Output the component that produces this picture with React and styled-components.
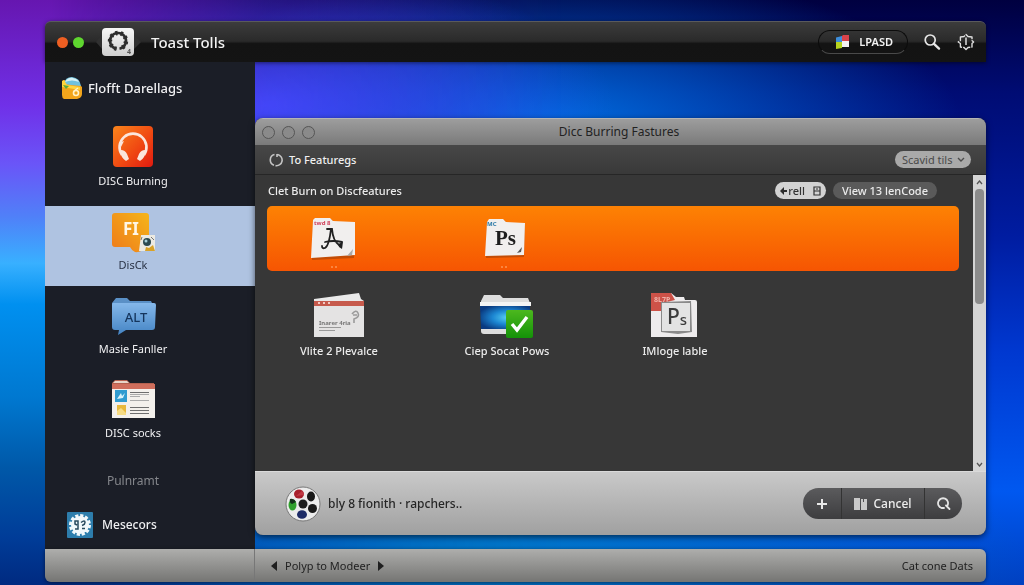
import React from 'react';
import styled, { createGlobalStyle } from 'styled-components';

const sections = [
    { id: 'burning', label: 'DISC Burning', icon: <HeadphonesIcon /> },
    { id: 'disck', label: 'DisCk', icon: <FlashIcon />, active: true },
    { id: 'masie', label: 'Masie Fanller', icon: <AltIcon /> },
    { id: 'socks', label: 'DISC socks', icon: <CardIcon /> },
];

const files = [
    { id: 'vlite', label: 'Vlite 2 Plevalce', icon: <BrowserIcon /> },
    { id: 'ciep', label: 'Ciep Socat Pows', icon: <CheckedFolderIcon /> },
    { id: 'imloge', label: 'IMloge lable', icon: <PsStackIcon /> },
];

const App = () => {
    return (
        <>
            <GlobalStyle />
            <Desktop>
                <TitleBar>
                    <Lights>
                        <Light $color="#ee5f22" aria-label="Close" />
                        <Light $color="#5fd62f" aria-label="Zoom" />
                    </Lights>
                    <AppIcon />
                    <AppTitle>Toast Tolls</AppTitle>
                    <AccountButton><FlagIcon />LPASD</AccountButton>
                    <IconButton aria-label="Search"><SearchIcon /></IconButton>
                    <IconButton aria-label="Settings"><CogIcon /></IconButton>
                </TitleBar>

                <Body>
                    <Sidebar>
                        <SidebarTitle><LibraryIcon />Flofft Darellags</SidebarTitle>
                        <SectionList>
                            {sections.map((s) => (
                                <li key={s.id}>
                                    <SectionLink href={'#' + s.id} $active={s.active}>
                                        {s.icon}
                                        <span>{s.label}</span>
                                    </SectionLink>
                                </li>
                            ))}
                        </SectionList>
                        <Muted>Pulnramt</Muted>
                        <SidebarFooter href="#mesecors"><BadgeIcon />Mesecors</SidebarFooter>
                    </Sidebar>

                    <Main>
                        <Window>
                            <WindowBar>
                                <WindowDots><Dot aria-label="Close window" /><Dot aria-label="Minimise window" /><Dot aria-label="Zoom window" /></WindowDots>
                                <WindowTitle>Dicc Burring Fastures</WindowTitle>
                            </WindowBar>
                            <Toolbar>
                                <RefreshIcon />
                                <ToolbarTitle>To Featuregs</ToolbarTitle>
                                <SelectWrap>
                                    <Select aria-label="Sort"><option>Scavid tils</option></Select>
                                    <ChevronIcon />
                                </SelectWrap>
                            </Toolbar>
                            <ScrollArea>
                                <Content>
                                    <ContentHead>
                                        <ContentTitle>Clet Burn on Discfeatures</ContentTitle>
                                        <Pill $light><BackIcon />rell<DrawerIcon /></Pill>
                                        <Pill>View 13 lenCode</Pill>
                                    </ContentHead>
                                    <Featured>
                                        <FeaturedItem aria-label="Fonts"><FontFolderIcon /></FeaturedItem>
                                        <FeaturedItem aria-label="Photoshop"><PsFolderIcon /></FeaturedItem>
                                    </Featured>
                                    <FileGrid>
                                        {files.map((f) => (
                                            <li key={f.id}>
                                                <FileButton>{f.icon}<span>{f.label}</span></FileButton>
                                            </li>
                                        ))}
                                    </FileGrid>
                                </Content>
                                <Scrollbar>
                                    <ScrollButton aria-label="Scroll up"><ArrowIcon up /></ScrollButton>
                                    <Track><Thumb /></Track>
                                    <ScrollButton aria-label="Scroll down"><ArrowIcon /></ScrollButton>
                                </Scrollbar>
                            </ScrollArea>
                            <ActionBar>
                                <ReelIcon />
                                <Status>bly 8 fionith · rapchers..</Status>
                                <ButtonGroup>
                                    <GroupButton aria-label="Add"><PlusIcon /></GroupButton>
                                    <GroupButton $wide><BookIcon />Cancel</GroupButton>
                                    <GroupButton aria-label="Find"><FindIcon /></GroupButton>
                                </ButtonGroup>
                            </ActionBar>
                        </Window>
                    </Main>
                </Body>

                <Footer>
                    <FooterSide />
                    <FooterMain>
                        <StepButton aria-label="Previous"><TriangleIcon /></StepButton>
                        <span>Polyp to Modeer</span>
                        <StepButton aria-label="Next"><TriangleIcon right /></StepButton>
                        <FooterEnd>Cat cone Dats</FooterEnd>
                    </FooterMain>
                </Footer>
            </Desktop>
        </>
    )
}

export default App;

/* ---------- icons ---------- */

function AppIcon() {
    return (
        <svg width="48" height="32" viewBox="0 0 48 32" aria-hidden="true">
            <defs>
                <linearGradient id="appBg" x1="0" y1="0" x2="0" y2="1">
                    <stop offset="0" stopColor="#f7f7f7" />
                    <stop offset="1" stopColor="#cfcfcf" />
                </linearGradient>
            </defs>
            <path d="M8 9 2 16l6 7zM40 9l7 7-7 7z" fill="#303030" />
            <rect x="8" y="2" width="32" height="28" rx="4" fill="url(#appBg)" />
            <path d="M22.500 22.800A8 8 0 1 1 25.500 22.800" fill="none" stroke="#2d2d2d" strokeWidth="2.600" />
            <path d="M22.500 22.800A8 8 0 1 1 25.500 22.800" fill="none" stroke="#2d2d2d" strokeWidth="4.400" strokeDasharray="2.200 3" />
            <text x="33" y="28" fontSize="7" fontWeight="700" fill="#555">4</text>
        </svg>
    )
}

function FlagIcon() {
    return (
        <svg width="15" height="16" viewBox="0 0 15 16" aria-hidden="true">
            <path d="M1 3.500 7 2v6H1z" fill="#3d8edb" />
            <path d="M8 1h6v7H7V2z" fill="#d9434a" />
            <path d="M1 8h6v6l-6 1z" fill="#b5d21f" />
            <path d="M7 7h7v6H7z" fill="#f2f0f2" />
        </svg>
    )
}

function SearchIcon() {
    return (
        <svg width="18" height="18" viewBox="0 0 18 18" fill="none" stroke="#e6e6e6" aria-hidden="true">
            <circle cx="7.200" cy="7" r="5" strokeWidth="1.700" />
            <path d="m11 10.800 5 4.800" strokeWidth="2.400" strokeLinecap="round" />
        </svg>
    )
}

function CogIcon() {
    return (
        <svg width="18" height="18" viewBox="0 0 18 18" fill="none" stroke="#dedede" aria-hidden="true">
            <path d="M9 1.500 11 3.500 15 4v3.500L16.600 9 15 10.500V14l-4 .5L9 16.600 7 14.500 3.400 14v-3.500L1.200 9l2.200-1.500V4L7 3.500z" strokeWidth="1.400" strokeLinejoin="round" strokeDasharray="9 1" />
            <path d="M9 4.500v7.500" strokeWidth="1.500" />
        </svg>
    )
}

function LibraryIcon() {
    return (
        <svg width="22" height="24" viewBox="0 0 22 24" aria-hidden="true">
            <path d="M1 5 4 4l2 4h12l3 3v7q0 4-5 5H3q-2-1-2-4z" fill="#f2a51c" />
            <path d="M3 8Q4 1 11 1q8 1 9 9L10 9z" fill="#6fc1dd" />
            <path d="M4 6q3-5 8-4 5 1 6 4-7-3-14 0z" fill="#d6f1f5" />
            <path d="M1 5l2-1 3 5 13 2v3L1 11z" fill="#ffd43c" />
            <path d="M2 9l6 1-3 3z" fill="#58a83d" />
            <circle cx="15" cy="17" r="2.500" fill="none" stroke="#fff3c8" strokeWidth="1.600" />
            <path d="M17 12l-4 3" stroke="#fff3c8" strokeWidth="1.400" />
        </svg>
    )
}

function HeadphonesIcon() {
    return (
        <svg width="48" height="44" viewBox="0 0 48 44" aria-hidden="true">
            <defs>
                <linearGradient id="hp" x1="0" y1="0" x2="1" y2="1">
                    <stop offset="0" stopColor="#f9851c" />
                    <stop offset=".55" stopColor="#f04a12" />
                    <stop offset="1" stopColor="#e01a10" />
                </linearGradient>
            </defs>
            <rect x="4" y="0" width="40" height="41" rx="4" fill="url(#hp)" />
            <path d="M13 29A13.500 13.500 0 1 1 35 29" fill="none" stroke="#fbe6dc" strokeWidth="2.600" />
            <path d="M12 24q4 0 6 4l2 5-3 2q-5-3-6-10zM36 24q-4 0-6 4l-2 5 3 2q5-3 6-10z" fill="#fbe6dc" />
            <path d="m10 17 5-2-3 6z" fill="#fbe6dc" />
        </svg>
    )
}

function FlashIcon() {
    return (
        <svg width="48" height="44" viewBox="0 0 48 44" aria-hidden="true">
            <defs>
                <linearGradient id="fl" x1="0" y1="1" x2="1" y2="0">
                    <stop offset="0" stopColor="#ee7a1a" />
                    <stop offset="1" stopColor="#f5b51a" />
                </linearGradient>
            </defs>
            <path d="M6 3h31q3 0 3 3v31q-9 6-14 5-3-1-5-5H6q-3 0-3-3V6q0-3 3-3z" fill="url(#fl)" />
            <text x="14" y="25" fontSize="17" fontWeight="700" fill="#fff6e6">FI</text>
            <path d="M32 25h14v16H30z" fill="#eceae2" />
            <circle cx="38" cy="32" r="4" fill="#2c4a50" />
            <circle cx="37" cy="31" r="1.500" fill="#a8d0d8" />
            <path d="m36 41 1-4 3 1 4-3 2 6z" fill="#d9a227" />
            <path d="m42 27 3 3M33 27l-1 3" stroke="#777" />
        </svg>
    )
}

function AltIcon() {
    return (
        <svg width="48" height="44" viewBox="0 0 48 44" aria-hidden="true">
            <defs>
                <linearGradient id="alt" x1="0" y1="0" x2="0" y2="1">
                    <stop offset="0" stopColor="#85b8ea" />
                    <stop offset="1" stopColor="#4484c4" />
                </linearGradient>
            </defs>
            <path d="M3 9 7 4h11l3 3h21l2 4H3z" fill="#5a90c6" />
            <path d="M4 9h41q2 0 2 2l-1 22q0 3-3 3H17l-8 5 1-5H6q-3 0-3-3V11q0-2 1-2z" fill="url(#alt)" />
            <text x="27" y="28" textAnchor="middle" fontSize="13" fontWeight="500" fill="#15355c">ALT</text>
        </svg>
    )
}

function CardIcon() {
    return (
        <svg width="48" height="44" viewBox="0 0 48 44" aria-hidden="true">
            <path d="M3 10V5l3-3h12l3 3h24v6z" fill="#b4614f" />
            <path d="M4 5l2-2h12l2 2z" fill="#e8d5c8" />
            <path d="M3 9h43v31H3z" fill="#f3f0ec" />
            <path d="M3 6h43v5H3z" fill="#cf6e5c" />
            <path d="M6 12h12v12H6z" fill="#2f9bd0" />
            <path d="m8 21 4-6 1 3 3-3-2 5z" fill="#d8f2fb" />
            <path d="M8 27h9v10H8z" fill="#e9b93c" />
            <path d="m8 33 4-3 5 5v2H8z" fill="#f7dc84" />
            <path d="M21 14.500h19M21 29.500h19M21 32.500h19M21 35.500h19" stroke="#6e6e6e" />
            <path d="M21 22.500h19M21 18.500h10M21 16.500h19" stroke="#aaa" />
        </svg>
    )
}

function BadgeIcon() {
    return (
        <svg width="26" height="26" viewBox="0 0 26 26" aria-hidden="true">
            <rect width="26" height="26" rx="1" fill="#2d7dac" />
            <circle cx="13" cy="13" r="9" fill="#f2f8fb" />
            <circle cx="13" cy="13" r="9" fill="none" stroke="#f2f8fb" strokeWidth="4" strokeDasharray="3 1.700" />
            <path d="M8 17h3V9H8v3l2 1M14 10.500q4-3 4 0 0 2-3 3M15 16.500h3" fill="none" stroke="#2a4a5e" strokeWidth="1.500" />
        </svg>
    )
}

function RefreshIcon() {
    return (
        <svg width="14" height="14" viewBox="0 0 14 14" fill="none" stroke="#c4c4c4" strokeWidth="1.600" aria-hidden="true">
            <path d="M5.500 1.500A5.600 5.600 0 0 0 5 12.200M8.500 1.500A5.600 5.600 0 0 1 6.500 12.600M8 1v3" />
        </svg>
    )
}

function ChevronIcon() {
    return (
        <svg width="8" height="6" viewBox="0 0 8 6" fill="none" stroke="#4c4c4c" strokeWidth="1.400" aria-hidden="true">
            <path d="m1 1 3 3 3-3" />
        </svg>
    )
}

function BackIcon() {
    return (
        <svg width="7" height="8" viewBox="0 0 7 8" aria-hidden="true">
            <path d="M4 0v3h3v2H4v3L0 4z" fill="#2b2b2b" />
        </svg>
    )
}

function DrawerIcon() {
    return (
        <svg width="8" height="10" viewBox="0 0 8 10" fill="none" stroke="#333" strokeWidth="1.200" aria-hidden="true">
            <path d="M1 1h6v8H1zM1 5h6M3 3h2" />
        </svg>
    )
}

function FontFolderIcon() {
    return (
        <svg width="46" height="52" viewBox="0 0 46 52" aria-hidden="true">
            <path d="m3 3 18-1 3 3 21 2-1 34-42 2z" fill="#8f3a08" opacity=".5" />
            <path d="m3 3 2-2h15l3 3 22 1v33L1 41z" fill="#f1efee" />
            <text x="4" y="8" fontSize="6" fontWeight="700" fill="#d0405a">twd 8</text>
            <path d="M21 12q-2 17-6 19-3 1-3-2M17 12h5q1 12 7 16M15 25q8-2 17 0" fill="none" stroke="#202020" strokeWidth="1.800" strokeLinecap="round" />
            <path d="m28 27 5-2-1 7-3-2z" fill="#202020" />
            <path d="m37 39 6-7-1 6z" fill="#aaa" />
            <path d="M21 50h2M25 50h2" stroke="#ffb27a" />
        </svg>
    )
}

function PsFolderIcon() {
    return (
        <svg width="42" height="52" viewBox="0 0 42 52" aria-hidden="true">
            <path d="m3 4 17-1 3 3 18 1-1 33-38 1z" fill="#8f3a08" opacity=".5" />
            <path d="m3 5 2-3h14l3 3 19 1-1 32-39 1z" fill="#f1efee" />
            <text x="3" y="9" fontSize="6" fontWeight="700" fill="#2d7ba8">MC</text>
            <SerifText x="11" y="28" fontSize="21" fontWeight="700" fill="#1e1e1e">Ps</SerifText>
            <path d="m33 36 5-6-1 5z" fill="#555" />
            <path d="M17 50h2M21 50h2" stroke="#ffb27a" />
        </svg>
    )
}

function BrowserIcon() {
    return (
        <svg width="56" height="48" viewBox="0 0 56 48" aria-hidden="true">
            <path d="m3 7 45-6 2 6 3 2H3z" fill="#e9e9e9" />
            <path d="M3 9h50v36H3z" fill="#e4e3e3" />
            <path d="M3 9h50v5H3z" fill="#c65a4c" />
            <path d="M7 11h2M12 11h2M17 11h2" stroke="#f3c9c2" strokeWidth="2" />
            <text x="8" y="33" fontSize="6" fontWeight="700" fill="#777">Inarer 4ria</text>
            <path d="M8 35.500h22M8 38.500h16" stroke="#999" />
            <path d="M41 22q4-5 6-1t-4 6v4M42 23h4" fill="none" stroke="#9a9a9a" strokeWidth="1.600" />
        </svg>
    )
}

function CheckedFolderIcon() {
    return (
        <svg width="56" height="48" viewBox="0 0 56 48" aria-hidden="true">
            <defs>
                <radialGradient id="sky" cx=".55" cy=".5" r=".6">
                    <stop offset="0" stopColor="#58d0f4" />
                    <stop offset=".5" stopColor="#1c86d2" />
                    <stop offset="1" stopColor="#0a3a80" />
                </radialGradient>
                <linearGradient id="ok" x1="0" y1="0" x2="0" y2="1">
                    <stop offset="0" stopColor="#4cb81e" />
                    <stop offset="1" stopColor="#149208" />
                </linearGradient>
            </defs>
            <path d="M2 9 5 3h16l3 3h25l2 5v29q0 2-3 2H5q-3 0-3-3z" fill="#dedede" />
            <path d="M1 10h51v4H1z" fill="#f4f4f4" />
            <path d="M1 14h50v23H2z" fill="url(#sky)" />
            <rect x="27" y="18" width="27" height="28" rx="2" fill="url(#ok)" />
            <path d="m33 32 5 6 10-13" fill="none" stroke="#fff" strokeWidth="3.400" />
        </svg>
    )
}

function PsStackIcon() {
    return (
        <svg width="56" height="48" viewBox="0 0 56 48" aria-hidden="true">
            <path d="M4 1h20l5 4h8l1 3h10q2 0 2 2v35H4z" fill="#eeeced" />
            <path d="M4 1h20l4 7-12 3v8H4z" fill="#cd5248" />
            <text x="7" y="10" fontSize="7" fontWeight="700" fill="#efb0a8">8L7P</text>
            <path d="m14 10 30-1 1 31-14 2-17-2z" fill="#8a8a8a" />
            <path d="M15 11h28v28H15z" fill="#e3e3e3" />
            <text x="20" y="32" fontSize="21" fontWeight="500" fill="#3c3c3c">P<tspan fontSize="15" dy="1">s</tspan></text>
        </svg>
    )
}

function ReelIcon() {
    return (
        <svg width="36" height="36" viewBox="0 0 36 36" aria-hidden="true">
            <circle cx="18" cy="18" r="17" fill="#ececec" stroke="#777" />
            <ellipse cx="14" cy="8" rx="5" ry="4.500" fill="#a8202c" />
            <ellipse cx="26" cy="10.500" rx="4" ry="5" fill="#191919" />
            <ellipse cx="27.500" cy="22.500" rx="4.500" ry="4.500" fill="#191919" />
            <ellipse cx="17" cy="28.500" rx="5" ry="4.300" fill="#1d2b66" />
            <ellipse cx="7.500" cy="19" rx="4" ry="5.500" fill="#2fa02c" />
            <path d="M5 13q4-1 6 3l-4 2q-3-1-2-5z" fill="#15301a" />
            <circle cx="18" cy="18" r="4.500" fill="#1f1f1f" />
            <path d="m11 10 6-5q2 2 2 4z" fill="#d8505a" opacity=".5" />
        </svg>
    )
}

function PlusIcon() {
    return (
        <svg width="10" height="10" viewBox="0 0 10 10" stroke="#e8e8e8" strokeWidth="2" aria-hidden="true">
            <path d="M5 0v10M0 5h10" />
        </svg>
    )
}

function BookIcon() {
    return (
        <svg width="13" height="12" viewBox="0 0 13 12" fill="#c9c9c9" aria-hidden="true">
            <path d="M0 0h6v12H0zM7 1h2v3h1V1h3v11H7z" />
        </svg>
    )
}

function FindIcon() {
    return (
        <svg width="14" height="14" viewBox="0 0 14 14" fill="none" stroke="#e4e4e4" strokeWidth="1.800" aria-hidden="true">
            <path d="M7 11H4.500A5 5 0 1 1 10.500 8.500M9 8.500l3.500 3.500" strokeLinecap="round" />
        </svg>
    )
}

function ArrowIcon({ up }) {
    return (
        <svg width="7" height="5" viewBox="0 0 7 5" fill="none" stroke="#555" strokeWidth="1.300" aria-hidden="true">
            <path d={up ? 'M1 4 3.500 1 6 4' : 'M1 1l2.500 3L6 1'} />
        </svg>
    )
}

function TriangleIcon({ right }) {
    return (
        <svg width="6" height="10" viewBox="0 0 6 10" fill="#1f1f1f" aria-hidden="true">
            <path d={right ? 'M0 0v10l6-5z' : 'M6 0v10L0 5z'} />
        </svg>
    )
}

/* ---------- styles ---------- */

const GlobalStyle = createGlobalStyle`
    * {
        box-sizing: border-box;
    }
    body {
        margin: 0;
        font-family: 'Noto Sans', 'Open Sans', sans-serif;
        font-size: 12px;
        line-height: 16px;
    }
    button, select {
        margin: 0;
        padding: 0;
        border: none;
        background: none;
        font: inherit;
        color: inherit;
        cursor: pointer;
    }
    h1, h2, h3, p, ul {
        margin: 0;
        padding: 0;
        font-size: inherit;
        font-weight: 400;
        list-style: none;
    }
    a {
        color: inherit;
        text-decoration: none;
    }
    svg {
        display: block;
        flex: none;
    }
`;

const SerifText = styled.text`
    font-family: 'Liberation Serif', serif;
`;

const Desktop = styled.div`
    position: relative;
    z-index: 0;
    display: flex;
    flex-direction: column;
    min-height: 100vh;
    padding: 21px 38px 3px 45px;
    background:
        radial-gradient(ellipse 34% 24% at 26% 18%, #3050ff, transparent),
        radial-gradient(ellipse 40% 28% at 54% 22%, rgba(0, 120, 235, 0.9), transparent),
        radial-gradient(ellipse 55% 30% at 45% 96%, rgba(0, 130, 200, 0.9), transparent),
        linear-gradient(180deg, #000040 0%, #000c74 16%, #001ca0 40%, #0038d0 60%, #0058f0 84%, #0040c0 100%);

    /* glow behind the left edge */
    &::before {
        content: '';
        position: fixed;
        inset: 0;
        z-index: -1;
        background: linear-gradient(180deg, #6616b0 0%, #7030e8 18%, #6a55f8 28%, #5080f8 37%, #38b0ff 45%, #0090f0 52%, #0078d0 68%, #0058a8 80%, #003c98 92%, #002a80 100%);
        mask-image: linear-gradient(90deg, #000 5%, rgba(0, 0, 0, 0.3) 26%, transparent 55%);
    }
`;

const TitleBar = styled.header`
    display: flex;
    align-items: center;
    height: 41px;
    padding: 0 11px 0 12px;
    border-top: 1px solid #5a5a5c;
    border-radius: 6px 6px 0 0;
    background: linear-gradient(#3c3c3c 0%, #2a2a2a 48%, #131313 54%, #141414 100%);
    color: #f2f2f2;
    box-shadow: 0 1px 4px rgba(0, 0, 0, 0.5);
`;

const Lights = styled.div`
    display: flex;
    gap: 5px;
    margin-right: 10px;
`;

const Light = styled.button`
    width: 11px;
    height: 11px;
    border-radius: 50%;
    background: ${(p) => p.$color};
`;

const AppTitle = styled.h1`
    flex: 1;
    margin-left: 9px;
    font-size: 15px;
    font-weight: 500;
`;

const AccountButton = styled.button`
    display: flex;
    align-items: center;
    gap: 9px;
    height: 24px;
    margin-right: 15px;
    padding: 0 14px 0 16px;
    border: 1px solid #0c0c0c;
    border-bottom-color: #4a4a4a;
    border-radius: 12px;
    font-size: 11px;
    font-weight: 600;
`;

const IconButton = styled.button`
    & + & {
        margin-left: 16px;
    }
`;

const Body = styled.div`
    display: flex;
    flex: 1;
`;

const Sidebar = styled.nav`
    display: flex;
    flex-direction: column;
    width: 210px;
    padding-bottom: 11px;
    background: #1b1e27;
    color: #f0f0f2;
    font-weight: 500;
`;

const SidebarTitle = styled.h2`
    display: flex;
    align-items: center;
    gap: 5px;
    padding: 14px 16px 22px;
    font-size: 13px;
    font-weight: 500;
`;

const SectionList = styled.ul`
    display: flex;
    flex-direction: column;
    gap: 4px;
`;

const SectionLink = styled.a`
    display: flex;
    flex-direction: column;
    align-items: center;
    gap: 3px;
    padding: 4px 34px 13px 0;
    background: ${(p) => (p.$active ? '#afc3e1' : 'transparent')};
    color: ${(p) => (p.$active ? '#2a3346' : 'inherit')};
    font-size: 11px;
`;

const Muted = styled.p`
    margin-top: 19px;
    padding-right: 34px;
    color: #85878c;
    text-align: center;
`;

const SidebarFooter = styled.a`
    display: flex;
    align-items: center;
    gap: 9px;
    margin-top: auto;
    padding-left: 22px;
`;

const Main = styled.main`
    display: flex;
    flex: 1;
    padding: 56px 0 14px;
`;

const Window = styled.section`
    display: flex;
    flex: 1;
    flex-direction: column;
    overflow: hidden;
    border-radius: 8px;
    background: #373737;
    box-shadow: 0 2px 6px rgba(0, 0, 0, 0.6);
`;

const WindowBar = styled.div`
    display: grid;
    grid-template-columns: 1fr auto 1fr;
    align-items: center;
    height: 27px;
    padding: 0 10px 0 7px;
    border-top: 1px solid #b5b5b5;
    background: linear-gradient(#9d9d9d, #7a7a7a);
    color: #222;
`;

const WindowDots = styled.div`
    display: flex;
    gap: 7px;
`;

const Dot = styled.button`
    width: 13px;
    height: 13px;
    border: 1px solid #555;
    border-radius: 50%;
    background: #8a8a8a;
`;

const WindowTitle = styled.h2`
    text-align: center;
`;

const Toolbar = styled.div`
    display: flex;
    align-items: center;
    gap: 6px;
    height: 30px;
    padding: 0 15px 0 14px;
    border-bottom: 1px solid #262626;
    background: linear-gradient(#474747, #393939);
    color: #f0f0f0;
`;

const ToolbarTitle = styled.h3`
    flex: 1;
    font-size: 11px;
    font-weight: 500;
`;

/* the arrow shares the grid cell of the select */
const SelectWrap = styled.div`
    display: grid;
    align-items: center;

    & > * {
        grid-area: 1 / 1;
    }
    & > svg {
        justify-self: end;
        margin-right: 6px;
        pointer-events: none;
    }
`;

const Select = styled.select`
    height: 17px;
    padding: 0 18px 0 7px;
    border-radius: 9px;
    background: #a9a9a9;
    color: #4a4a4a;
    font-size: 11px;
    appearance: none;
`;

const ScrollArea = styled.div`
    display: flex;
    flex: 1;
`;

const Content = styled.div`
    flex: 1;
    color: #ececec;
`;

const ContentHead = styled.div`
    display: flex;
    align-items: center;
    gap: 7px;
    padding: 7px 36px 7px 13px;
`;

const ContentTitle = styled.h3`
    flex: 1;
    font-size: 11px;
    font-weight: 500;
`;

const Pill = styled.button`
    display: flex;
    align-items: center;
    gap: ${(p) => (p.$light ? '1px' : '0')};
    height: 17px;
    padding: 0 ${(p) => (p.$light ? '5px' : '9px')};
    border-radius: 9px;
    background: ${(p) => (p.$light ? '#d2d2d2' : '#5a5a5a')};
    color: ${(p) => (p.$light ? '#333' : '#ececec')};
    font-size: 11px;
    font-weight: 500;

    & > svg:last-child {
        margin-left: 7px;
    }
`;

const Featured = styled.div`
    display: flex;
    align-items: flex-start;
    gap: 128px;
    height: 65px;
    margin: 0 14px 0 12px;
    padding: 11px 43px 0;
    border-radius: 5px;
    background: linear-gradient(#fd8204, #f65502);
`;

const FeaturedItem = styled.button`
    display: block;
`;

const FileGrid = styled.ul`
    display: grid;
    grid-template-columns: repeat(auto-fill, 168px);
    padding-top: 21px;
`;

const FileButton = styled.button`
    display: flex;
    flex-direction: column;
    align-items: center;
    gap: 3px;
    width: 100%;
    font-size: 11px;
    font-weight: 500;
`;

const Scrollbar = styled.div`
    display: flex;
    flex-direction: column;
    width: 13px;
    background: #d4d4d4;
`;

const ScrollButton = styled.button`
    display: grid;
    place-items: center;
    height: 14px;
`;

const Track = styled.div`
    flex: 1;
    padding: 0 2px;
`;

const Thumb = styled.div`
    height: 43%;
    border-radius: 4px;
    background: #8b8b8b;
`;

const ActionBar = styled.div`
    display: flex;
    align-items: center;
    gap: 7px;
    height: 64px;
    padding: 0 24px 0 30px;
    border-top: 1px solid #dadada;
    background: linear-gradient(#c9c9c9, #a0a0a0);
`;

const Status = styled.p`
    flex: 1;
    color: #262626;
    font-weight: 500;
`;

const ButtonGroup = styled.div`
    display: flex;
    overflow: hidden;
    height: 31px;
    border-radius: 16px;
    background: linear-gradient(#5b5b5d, #3d3d3f);
`;

const GroupButton = styled.button`
    display: flex;
    align-items: center;
    justify-content: center;
    gap: 6px;
    width: ${(p) => (p.$wide ? '83px' : '38px')};
    color: #eee;
    font-weight: 500;

    & + & {
        border-left: 1px solid #333;
    }
`;

const Footer = styled.footer`
    display: flex;
    height: 33px;
    border-radius: 0 6px 6px 6px;
    background: linear-gradient(#aeaeac, #757573);
    color: #1f1f1f;
    box-shadow: 0 1px 4px rgba(0, 0, 0, 0.5);
`;

const FooterSide = styled.div`
    width: 210px;
    border-right: 1px solid #777;
`;

const FooterMain = styled.div`
    display: flex;
    align-items: center;
    flex: 1;
    gap: 8px;
    padding: 0 13px 0 16px;
    font-size: 11px;
`;

const StepButton = styled.button`
    display: block;
`;

const FooterEnd = styled.span`
    margin-left: auto;
`;
